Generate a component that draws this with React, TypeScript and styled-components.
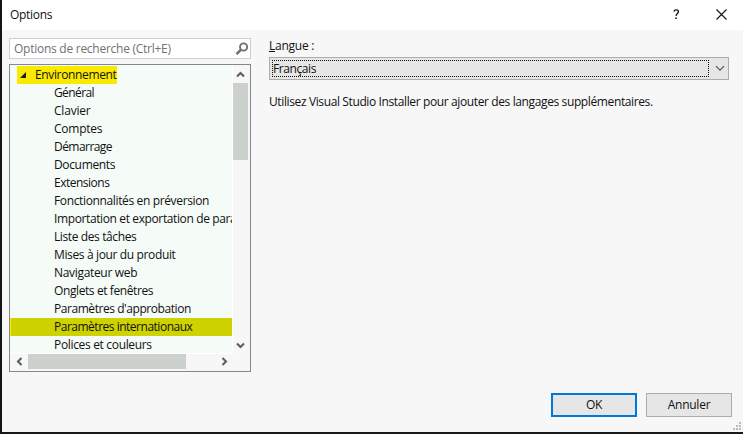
import React from "react";
import styled, { createGlobalStyle } from "styled-components";

const GlobalStyle = createGlobalStyle`
  * { box-sizing: border-box; }
  body { margin: 0; overflow: hidden; }
`;

const Dialog = styled.div`
  width: 743px;
  height: 434px;
  display: flex;
  flex-direction: column;
  background: #f7f7f7;
  border-left: 2px solid #141519;
  border-bottom: 2px solid #19191b;
  font-family: "Open Sans", "Noto Sans", sans-serif;
  font-size: 12px;
  line-height: 18px;
  color: #111;
`;

const Text = styled.span<{ $spacing?: number }>`
  white-space: nowrap;
  letter-spacing: ${(p) => p.$spacing ?? -0.25}px;
`;

const TitleBar = styled.header`
  height: 30px;
  flex: none;
  display: flex;
  align-items: center;
  padding: 0 16px 0 8px;
  background: #fff;
`;

const TitleActions = styled.div`
  margin-left: auto;
  padding-bottom: 2px;
  display: flex;
  align-items: center;
  gap: 36px;
`;

const Body = styled.main`
  display: flex;
  gap: 18px;
  height: 342px;
  padding: 8px 14px 0 7px;
`;

const Sidebar = styled.aside`
  width: 242px;
  flex: none;
  display: flex;
  flex-direction: column;
  gap: 5px;
`;

const SearchBox = styled.div`
  height: 21px;
  display: flex;
  align-items: center;
  justify-content: space-between;
  padding: 0 1px 0 4px;
  background: #fff;
  border: 1px solid #cccedb;
  color: #727272;
`;

const TreePanel = styled.div`
  height: 308px;
  display: grid;
  grid-template-columns: 223px 15px;
  grid-template-rows: 289px 15px;
  border: 1px solid #828790;
`;

const Tree = styled.div`
  overflow: hidden;
  padding-top: 1px;
  background: #f5fbf7;
  border-right: 1px solid #fff;
  border-bottom: 1px solid #fff;
`;

const Category = styled.div`
  display: flex;
  align-items: center;
  width: 100px;
  height: 18px;
  margin-left: 7px;
  padding-left: 3px;
  gap: 9px;
  background: #fae900;
  svg {
    flex: none;
  }
`;

const Item = styled.div<{ $selected?: boolean }>`
  height: 18px;
  padding-left: ${(p) => (p.$selected ? 43 : 44)}px;
  overflow: hidden;
  white-space: nowrap;
  background: ${(p) => (p.$selected ? "#ced200" : "transparent")};
  border-left: ${(p) => (p.$selected ? "1px solid #fae900" : "0")};
`;

const VerticalBar = styled.div`
  display: flex;
  flex-direction: column;
  align-items: center;
  height: 289px;
`;

const VerticalThumb = styled.div`
  width: 15px;
  height: 77px;
  background: #cdd1ce;
  margin-bottom: auto;
`;

const HorizontalBar = styled.div`
  display: flex;
  align-items: center;
  width: 223px;
  height: 15px;
`;

const HorizontalThumb = styled.div`
  width: 158px;
  height: 15px;
  background: #cdd1ce;
  margin-right: auto;
`;

const ArrowSlot = styled.div<{ $w: number; $h: number }>`
  width: ${(p) => p.$w}px;
  height: ${(p) => p.$h}px;
  flex: none;
  display: flex;
  align-items: center;
  justify-content: center;
`;

const Content = styled.section`
  flex: 1;
  min-width: 0;
  display: flex;
  flex-direction: column;
`;

const FieldLabel = styled.label`
  height: 20px;
  margin-top: -1px;
  u {
    text-underline-offset: 1px;
    text-decoration-skip-ink: none;
  }
`;

const Select = styled.div`
  display: flex;
  align-items: center;
  width: 460px;
  height: 23px;
  padding-left: 2px;
  background: #e6e6e6;
  border: 1px solid #acacac;
`;

const SelectValue = styled.div`
  position: relative;
  width: 437px;
  height: 17px;
  padding-left: 1px;
  line-height: 17px;
`;

const FocusRing = styled.svg`
  position: absolute;
  inset: 0;
`;

const Chevron = styled.svg`
  margin-left: 6px;
`;

const Hint = styled.p`
  margin: 13px 0 0;
`;

const Footer = styled.footer`
  flex: 1;
  display: flex;
  justify-content: flex-end;
  gap: 9px;
  padding: 21px 0 0;
`;

const Button = styled.button<{ $primary?: boolean }>`
  width: 86px;
  height: 24px;
  padding: 0;
  font: inherit;
  line-height: 18px;
  color: #111;
  background: #e6e6e6;
  border: ${(p) => (p.$primary ? "2px solid #0078d7" : "1px solid #acacac")};
`;

const Grip = styled.svg`
  align-self: flex-end;
  margin: 0 2px 2px -8px;
`;

const items: { label: string; spacing?: number }[] = [
  { label: "Général", spacing: -0.6 },
  { label: "Clavier", spacing: -0.2 },
  { label: "Comptes" },
  { label: "Démarrage", spacing: -0.55 },
  { label: "Documents", spacing: -0.35 },
  { label: "Extensions", spacing: -0.5 },
  { label: "Fonctionnalités en préversion", spacing: -0.36 },
  { label: "Importation et exportation de paramètres", spacing: -0.38 },
  { label: "Liste des tâches", spacing: -0.39 },
  { label: "Mises à jour du produit", spacing: -0.36 },
  { label: "Navigateur web", spacing: -0.32 },
  { label: "Onglets et fenêtres", spacing: -0.4 },
  { label: "Paramètres d'approbation", spacing: -0.44 },
  { label: "Paramètres internationaux", spacing: -0.49 },
  { label: "Polices et couleurs", spacing: -0.33 },
];

const angles = { up: 0, right: 90, down: 180, left: 270 };

function Arrow({ dir }: { dir: keyof typeof angles }) {
  return (
    <svg width="9" height="9" viewBox="0 0 9 9">
      <path
        d="M1 6.5 4.5 3 8 6.5"
        fill="none"
        stroke="#5c605d"
        strokeWidth="2.1"
        transform={`rotate(${angles[dir]} 4.5 4.5)`}
      />
    </svg>
  );
}

export default function App() {
  return (
    <Dialog>
      <GlobalStyle />
      <TitleBar>
        <Text $spacing={-0.3}>Options</Text>
        <TitleActions>
          <svg width="7" height="11" viewBox="0 0 7 11">
            <path d="M1 2.6C1.2 1.3 2 .9 3.2.9 4.6.9 5.4 1.5 5.4 2.7 5.4 4.5 3.1 4.6 3.1 7" fill="none" stroke="#111" strokeWidth="1.3" />
            <path d="M2.3 8.4h1.6v1.6H2.3z" fill="#111" />
          </svg>
          <svg width="11" height="11" viewBox="0 0 11 11">
            <path d="M.5.5l10 10M10.5.5l-10 10" stroke="#111" strokeWidth="1.1" />
          </svg>
        </TitleActions>
      </TitleBar>
      <Body>
        <Sidebar>
          <SearchBox>
            <Text $spacing={-0.26}>Options de recherche (Ctrl+E)</Text>
            <svg width="14" height="14" viewBox="0 0 14 14">
              <circle cx="8.6" cy="5" r="3.6" fill="none" stroke="#717171" strokeWidth="1.9" />
              <path d="M6 7.7 1.5 12.2" stroke="#717171" strokeWidth="2.6" />
            </svg>
          </SearchBox>
          <TreePanel>
            <Tree>
              <Category>
                <svg width="6" height="6" viewBox="0 0 6 6">
                  <path d="M6 0v6H0z" fill="#1e1e1e" />
                </svg>
                <Text $spacing={-0.36}>Environnement</Text>
              </Category>
              {items.map((item) => (
                <Item key={item.label} $selected={item.label === "Paramètres internationaux"}>
                  <Text $spacing={item.spacing}>{item.label}</Text>
                </Item>
              ))}
            </Tree>
            <VerticalBar>
              <ArrowSlot $w={15} $h={18}><Arrow dir="up" /></ArrowSlot>
              <VerticalThumb />
              <ArrowSlot $w={15} $h={18}><Arrow dir="down" /></ArrowSlot>
            </VerticalBar>
            <HorizontalBar>
              <ArrowSlot $w={18} $h={15}><Arrow dir="left" /></ArrowSlot>
              <HorizontalThumb />
              <ArrowSlot $w={18} $h={15}><Arrow dir="right" /></ArrowSlot>
            </HorizontalBar>
          </TreePanel>
        </Sidebar>
        <Content>
          <FieldLabel>
            <Text><u>L</u>angue :</Text>
          </FieldLabel>
          <Select>
            <SelectValue>
              <Text $spacing={-0.42}>Français</Text>
              <FocusRing width="437" height="17" viewBox="0 0 437 17">
                <path d="M0 .5H437M0 16.5H437M.5 0V17M436.5 0V17" fill="none" stroke="#111" strokeDasharray="1 1" />
              </FocusRing>
            </SelectValue>
            <Chevron width="10" height="7" viewBox="0 0 10 7">
              <path d="M1 1.2 5 5.2 9 1.2" fill="none" stroke="#555" strokeWidth="1.2" />
            </Chevron>
          </Select>
          <Hint>
            <Text $spacing={-0.38}>Utilisez Visual Studio Installer pour ajouter des langages supplémentaires.</Text>
          </Hint>
        </Content>
      </Body>
      <Footer>
        <Button $primary><Text>OK</Text></Button>
        <Button><Text>Annuler</Text></Button>
        <Grip width="8" height="8" viewBox="0 0 8 8">
          <path d="M6 0h2v2H6zM3 3h2v2H3zM6 3h2v2H6zM0 6h2v2H0zM3 6h2v2H3zM6 6h2v2H6z" fill="#bbb" />
        </Grip>
      </Footer>
    </Dialog>
  );
}
